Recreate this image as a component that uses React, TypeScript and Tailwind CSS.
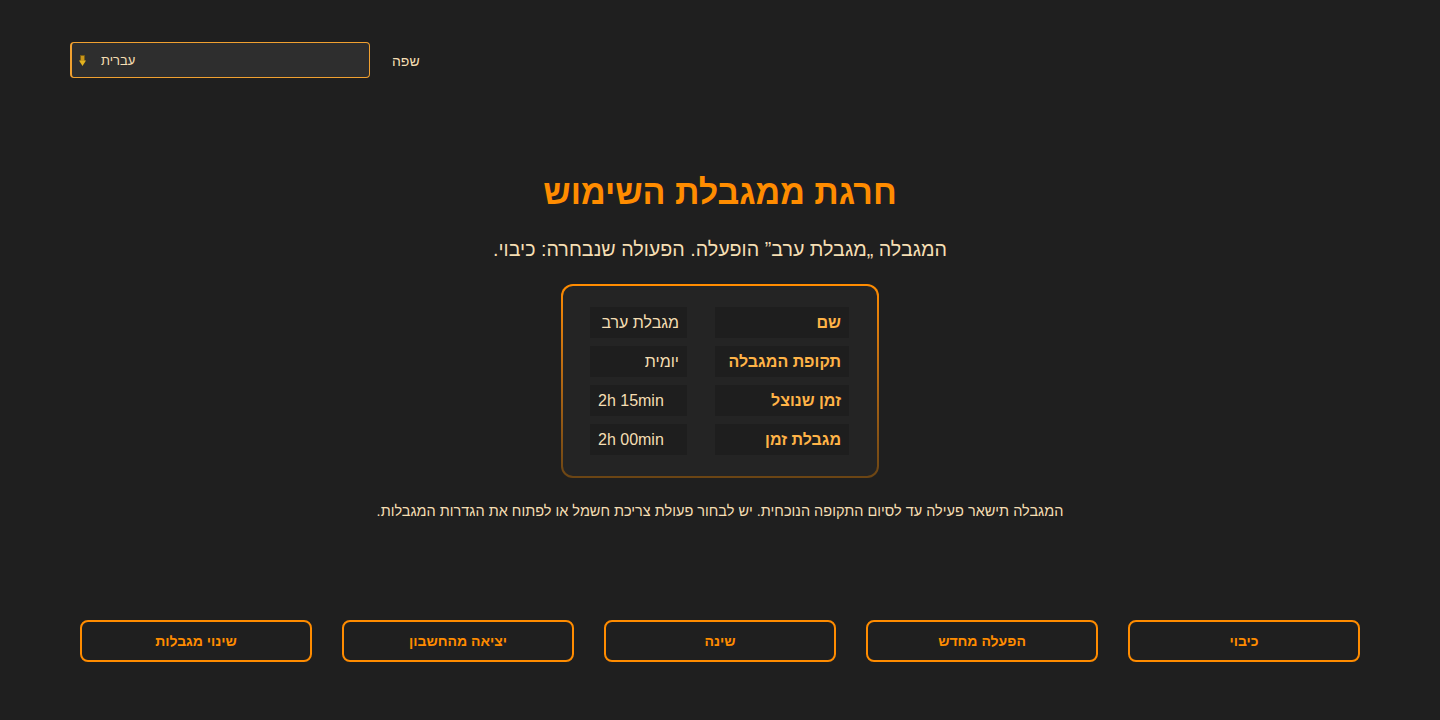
import React from "react";

const rows: [string, string][] = [
  ["שם", "מגבלת ערב"],
  ["תקופת המגבלה", "יומית"],
  ["זמן שנוצל", "2h 15min"],
  ["מגבלת זמן", "2h 00min"],
];

const buttons = ["כיבוי", "הפעלה מחדש", "שינה", "יציאה מהחשבון", "שינוי מגבלות"];

export default function App() {
  return (
    <div
      dir="rtl"
      className="w-[1440px] h-[720px] bg-[#1f1f1f] text-[#f5deb3] flex flex-col overflow-hidden"
      style={{ fontFamily: '"Liberation Sans", Arimo, Arial, sans-serif' }}
    >
      <div className="flex justify-end pl-[70px] pt-[42px]">
        <div className="flex items-center gap-[22px]">
          <span className="text-[14px] leading-[20px] pt-[2px] text-[#f5deb3]">שפה</span>
          <div
            dir="ltr"
            className="w-[300px] h-[36px] rounded-[4px] border border-l-2 border-[#f0a030] bg-[#2e2e2e] flex items-center pl-[7px] gap-[15px]"
          >
            <svg width="7" height="11" viewBox="0 0 7 11" className="shrink-0 mt-[1px]">
              <rect x="1.5" y="0.5" width="4" height="5.5" fill="#c9961a" stroke="#7a5c10" strokeWidth="0.7" />
              <path d="M0 5.5 L7 5.5 L3.5 11 Z" fill="#e3b21f" />
            </svg>
            <span dir="rtl" className="text-[13px] leading-[18px] pt-[2px] text-[#f5deb3]">עברית</span>
          </div>
        </div>
      </div>

      <div className="flex flex-col items-center mt-[90px]">
        <h1 className="text-[34px] leading-[48px] font-bold text-[#ff8c00]">חרגת ממגבלת השימוש</h1>
        <p className="mt-[18px] text-[19.7px] leading-[30px] text-[#f5deb3]">המגבלה „מגבלת ערב” הופעלה. הפעולה שנבחרה: כיבוי.</p>
        <div className="mt-[20px] rounded-[12px] p-[2px] bg-gradient-to-b from-[#ff8c00] to-[#6b4514]">
          <div className="rounded-[10px] bg-[#242424] pr-[28px] pl-[27px] pt-[21px] pb-[21px]">
            <div className="grid grid-cols-[134px_97px] gap-x-[28px] gap-y-[8px]">
              {rows.map(([k, v]) => (
                <React.Fragment key={k}>
                  <div className="h-[31px] bg-[#1e1e1e] flex items-center px-[8px] text-[16px] font-bold text-[#ffb347]">{k}</div>
                  <div dir="auto" className="h-[31px] bg-[#1e1e1e] flex items-center px-[8px] text-[16px] text-[#f5deb3] whitespace-nowrap">
                    {v}
                  </div>
                </React.Fragment>
              ))}
            </div>
          </div>
        </div>
        <p className="mt-[23px] text-[14.5px] leading-[20px] text-[#f5deb3]">
          המגבלה תישאר פעילה עד לסיום התקופה הנוכחית. יש לבחור פעולת צריכת חשמל או לפתוח את הגדרות המגבלות.
        </p>
      </div>

      <div className="mt-[99px] px-[80px] grid grid-cols-5 gap-[30px]">
        {buttons.map((b) => (
          <button
            key={b}
            className="h-[42px] rounded-[8px] border-2 border-[#ff8c00] bg-transparent text-[14px] font-bold text-[#ff8c00]"
          >
            {b}
          </button>
        ))}
      </div>
    </div>
  );
}
